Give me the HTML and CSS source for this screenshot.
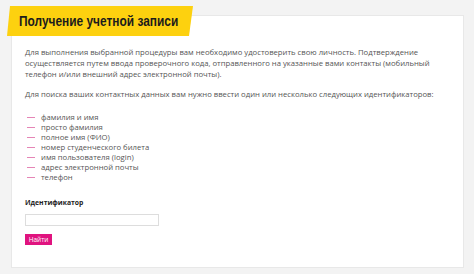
FILE: index.html
```html
<!DOCTYPE html>
<html lang="ru">
<head>
  <meta charset="UTF-8" />
  <title>Получение учетной записи</title>
  <link rel="stylesheet" href="styles.css">
</head>
<body>

<div class="card">
  <!-- Title -->
  <div class="banner">
    <h1>Получение учетной записи</h1>
  </div>

  <div class="content">
    <p>Для выполнения выбранной процедуры вам необходимо удостоверить свою личность. Подтверждение осуществляется путем ввода проверочного кода, отправленного на указанные вами контакты (мобильный телефон и/или внешний адрес электронной почты).</p>

    <p class="lead">Для поиска ваших контактных данных вам нужно ввести один или несколько следующих идентификаторов:</p>

    <ul class="ids">
      <li>фамилия и имя</li>
      <li>просто фамилия</li>
      <li>полное имя (ФИО)</li>
      <li>номер студенческого билета</li>
      <li>имя пользователя (login)</li>
      <li>адрес электронной почты</li>
      <li>телефон</li>
    </ul>

    <form class="search" onsubmit="return false">
      <label for="ident">Идентификатор</label>
      <input type="text" id="ident" />
      <button class="btn" type="submit">Найти</button>
    </form>
  </div>
</div>

</body>
</html>
```

FILE: styles.css
```css
* {
  margin: 0;
  padding: 0;
  box-sizing: border-box;
}

body {
  font-family: 'Open Sans', sans-serif;
  background: #f3f3f3;
  color: #555;
  padding: 15px 10px 0 11px;
}

.card {
  background: white;
  border: 1px solid #e8e8e8;
  width: 453px;
  height: 253px;
}

.banner {
  margin: -10px 0 0 -5px;
  width: 186px;
  height: 30px;
  background: #fdd10f;
  clip-path: polygon(3px 0, 100% 0, calc(100% - 4px) 100%, 0 100%);
  display: flex;
  align-items: center;
  padding-left: 12px;
}

/* no condensed face installed, so squeeze the bold sans */
.banner h1 {
  font-family: 'Liberation Sans', sans-serif;
  font-size: 14px;
  font-weight: bold;
  color: #1c1c1c;
  white-space: nowrap;
  transform: scaleX(0.85);
  transform-origin: left center;
}

.content {
  padding: 11px 14px 0 13px;
  font-size: 7.7px;
  line-height: 11px;
}

.content p {
  margin-bottom: 9px;
}

.content p.lead {
  margin-bottom: 12px;
}

.ids {
  list-style: none;
  margin-bottom: 15px;
}

.ids li {
  height: 10px;
  line-height: 10px;
  display: flex;
  align-items: flex-start;
  gap: 6px;
}

.ids li::before {
  content: "";
  flex: none;
  width: 8px;
  height: 1px;
  margin: 5px 0 0 2px;
  background: #e585b6;
}

.search label {
  display: block;
  font-weight: bold;
  color: #222;
  font-size: 6.8px;
  line-height: 11px;
  margin-bottom: 6px;
}

.search input {
  display: block;
  width: 134px;
  height: 12px;
  border: 1px solid #ddd;
  background: white;
  margin-bottom: 8px;
}

.btn {
  font-family: 'Open Sans', sans-serif;
  font-size: 6.5px;
  height: 11px;
  width: 27px;
  background: #e0137f;
  color: white;
  border: none;
  cursor: pointer;
}
```
